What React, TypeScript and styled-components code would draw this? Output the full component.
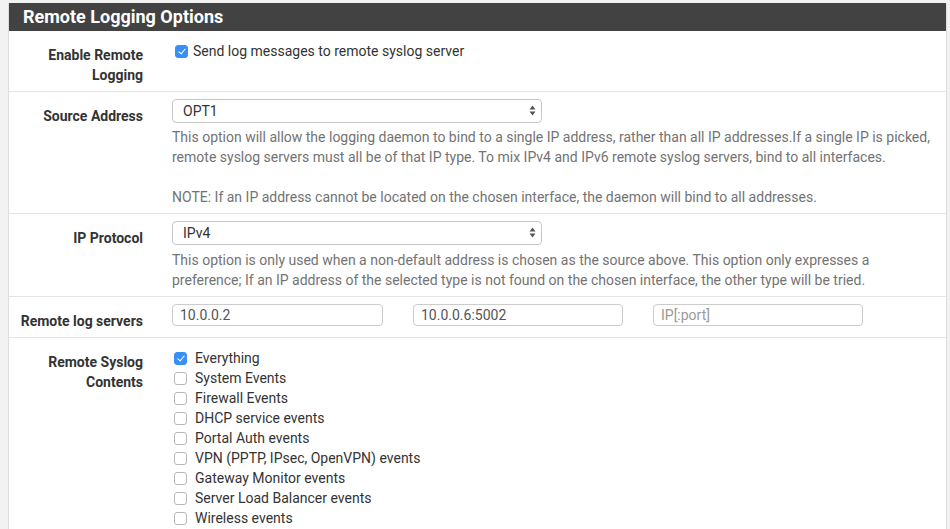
import styled, { createGlobalStyle } from 'styled-components';

const GlobalStyle = createGlobalStyle`
  body {
    margin: 0;
    background-color: #f2f2f2;
    font-family: Roboto, "Liberation Sans", sans-serif;
    font-size: 14px;
    line-height: 20px;
    color: #333333;
  }
`;

const contentItems = [
  { label: 'Everything', checked: true },
  { label: 'System Events', checked: false },
  { label: 'Firewall Events', checked: false },
  { label: 'DHCP service events', checked: false },
  { label: 'Portal Auth events', checked: false },
  { label: 'VPN (PPTP, IPsec, OpenVPN) events', checked: false },
  { label: 'Gateway Monitor events', checked: false },
  { label: 'Server Load Balancer events', checked: false },
  { label: 'Wireless events', checked: false },
];

function SelectArrows() {
  return (
    <svg width="7" height="11" viewBox="0 0 7 11">
      <path d="M3.5 0.5 L6.5 4.5 L0.5 4.5 Z" fill="#555" />
      <path d="M3.5 10.5 L6.5 6.5 L0.5 6.5 Z" fill="#555" />
    </svg>
  );
}

interface SelectProps {
  value: string;
}

function Select({ value }: SelectProps) {
  return (
    <SelectWrap>
      <SelectBox defaultValue={value}>
        <option>{value}</option>
      </SelectBox>
      <ArrowSlot>
        <SelectArrows />
      </ArrowSlot>
    </SelectWrap>
  );
}

function App() {
  return (
    <Page>
      <GlobalStyle />
      <Panel>
        <Header>Remote Logging Options</Header>

        <Row>
          <Label>Enable Remote Logging</Label>
          <Content>
            <CheckList>
              <CheckRow $gap={5} $pad={3}>
                <Check type="checkbox" defaultChecked />
                Send log messages to remote syslog server
              </CheckRow>
            </CheckList>
          </Content>
        </Row>

        <Row>
          <Label>Source Address</Label>
          <Content>
            <Select value="OPT1" />
            <Help $top={4}>
              This option will allow the logging daemon to bind to a single IP address, rather than all IP
              addresses.If a single IP is picked, remote syslog servers must all be of that IP type. To mix IPv4
              and IPv6 remote syslog servers, bind to all interfaces.
              <br />
              <br />
              NOTE: If an IP address cannot be located on the chosen interface, the daemon will bind to all
              addresses.
            </Help>
          </Content>
        </Row>

        <Row>
          <Label>IP Protocol</Label>
          <Content>
            <Select value="IPv4" />
            <Help $top={5}>
              This option is only used when a non-default address is chosen as the source above. This option only
              expresses a preference; If an IP address of the selected type is not found on the chosen interface,
              the other type will be tried.
            </Help>
          </Content>
        </Row>

        <Row>
          <Label>Remote log servers</Label>
          <Content>
            <InputRow>
              <TextInput defaultValue="10.0.0.2" />
              <TextInput defaultValue="10.0.0.6:5002" />
              <TextInput placeholder="IP[:port]" />
            </InputRow>
          </Content>
        </Row>

        <Row>
          <Label>Remote Syslog Contents</Label>
          <Content>
            <CheckList>
              {contentItems.map((item) => (
                <CheckRow key={item.label} $gap={8} $pad={2}>
                  <Check type="checkbox" defaultChecked={item.checked} />
                  {item.label}
                </CheckRow>
              ))}
            </CheckList>
          </Content>
        </Row>
      </Panel>
    </Page>
  );
}

export default App;

const Page = styled.div`
  padding: 3px 3px 0 8px;
`;

const Panel = styled.div`
  background-color: #ffffff;
  border: 1px solid #dddddd;
  border-top: none;
  border-bottom: none;
`;

const Header = styled.div`
  display: flex;
  align-items: center;
  height: 28px;
  padding: 0 14px;
  background-color: #424242;
  color: #ffffff;
  font-size: 18px;
  font-weight: 700;
`;

const Row = styled.div`
  display: grid;
  grid-template-columns: 149px 1fr;
  padding: 7px 0 6px;
  border-top: 1px solid #e4e4e4;

  &:nth-child(2) {
    border-top: none;
  }
`;

const Label = styled.div`
  padding: 7px 15px 0 0;
  text-align: right;
  font-weight: 700;
  color: #333333;
`;

const Content = styled.div`
  padding: 0 15px 0 14px;
`;

const SelectWrap = styled.div`
  position: relative;
  width: 370px;
`;

const SelectBox = styled.select`
  appearance: none;
  display: block;
  width: 100%;
  height: 24px;
  padding: 0 10px;
  border: 1px solid #c6c6c6;
  border-radius: 4px;
  background-color: #ffffff;
  font-family: inherit;
  font-size: 14px;
  color: #333333;
`;

const ArrowSlot = styled.span`
  position: absolute;
  right: 6px;
  top: 6px;
  display: flex;
  pointer-events: none;
`;

const Help = styled.div<{ $top: number }>`
  margin-top: ${(p) => p.$top}px;
  color: #737373;
`;

const InputRow = styled.div`
  display: flex;
  gap: 30px;
`;

const TextInput = styled.input`
  box-sizing: border-box;
  width: 210px;
  height: 22px;
  padding: 0 7px;
  border: 1px solid #cccccc;
  border-radius: 4px;
  font-family: inherit;
  font-size: 14px;
  color: #555555;

  &:first-child {
    width: 211px;
  }

  &::placeholder {
    color: #999999;
  }
`;

const CheckList = styled.div`
  padding-top: 3px;
`;

const CheckRow = styled.label<{ $gap: number; $pad: number }>`
  display: flex;
  align-items: center;
  gap: ${(p) => p.$gap}px;
  height: 20px;
  padding-left: ${(p) => p.$pad}px;
  color: #333333;
`;

const Check = styled.input`
  appearance: none;
  position: relative;
  box-sizing: border-box;
  width: 13px;
  height: 13px;
  margin: 0;
  border: 1px solid #b8b8b8;
  border-radius: 3px;
  background-color: #ffffff;

  &:checked {
    border-color: #3a8ff6;
    background-color: #3a8ff6;
  }

  &:checked::after {
    content: '';
    position: absolute;
    left: 3.5px;
    top: 1px;
    width: 3px;
    height: 6px;
    border: solid #ffffff;
    border-width: 0 1.6px 1.6px 0;
    transform: rotate(40deg);
  }
`;
